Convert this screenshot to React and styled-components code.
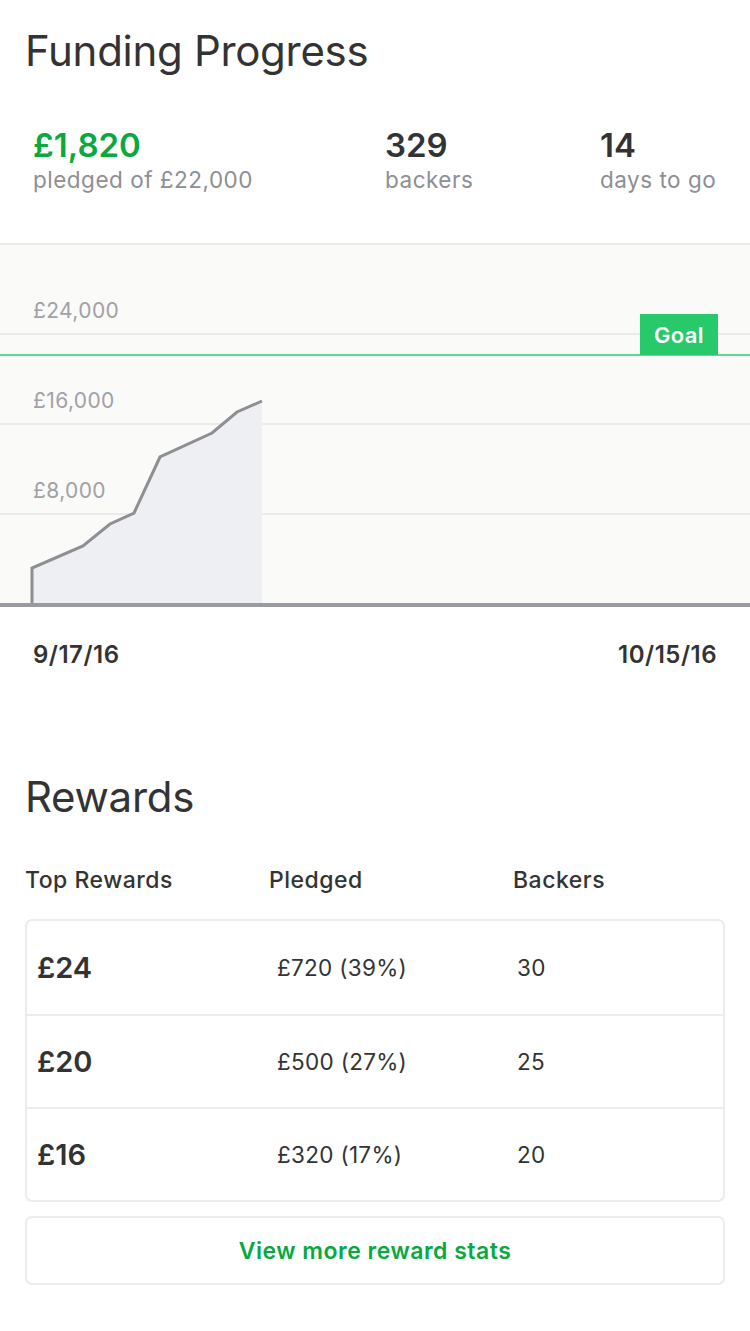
import React from "react";
import styled, { createGlobalStyle } from "styled-components";

const GlobalStyle = createGlobalStyle`
  body {
    margin: 0;
    background: #ffffff;
    font-family: Inter, "Liberation Sans", Arial, sans-serif;
    color: #333333;
  }
`;

const stats = [
  { value: "£1,820", label: "pledged of £22,000", green: true },
  { value: "329", label: "backers" },
  { value: "14", label: "days to go" },
];

const bands = ["£24,000", "£16,000", "£8,000", ""];

const rewards = [
  { amount: "£24", pledged: "£720 (39%)", backers: "30" },
  { amount: "£20", pledged: "£500 (27%)", backers: "25" },
  { amount: "£16", pledged: "£320 (17%)", backers: "20" },
];

// pledge curve, in chart pixels (0,0 = top-left under the top border)
const points = [
  [32, 358], [32, 323], [83, 301], [110, 279], [134, 268],
  [160, 212], [212, 188], [237, 167], [262, 156],
];

const App = () => {
  const line = points.map((p) => p.join(",")).join(" ");
  const area = `${line} 262,358`;

  return (
    <Page>
      <GlobalStyle />
      <Heading>Funding Progress</Heading>

      <StatsRow>
        {stats.map((s) => (
          <Stat key={s.label}>
            <StatValue $green={s.green}>{s.value}</StatValue>
            <StatLabel>{s.label}</StatLabel>
          </Stat>
        ))}
      </StatsRow>

      <Chart>
        {bands.map((b, i) => (
          <Band key={i} $last={i === bands.length - 1}>
            {b && <AxisLabel>{b}</AxisLabel>}
          </Band>
        ))}
        <Plot viewBox="0 0 750 358" preserveAspectRatio="none">
          <polygon points={area} fill="#eeeff2" />
          <polyline points={line} fill="none" stroke="#8e8e93" strokeWidth="3" strokeLinejoin="miter" />
          <line x1="0" y1="110" x2="750" y2="110" stroke="#2bcc6f" strokeWidth="1.5" />
        </Plot>
        <GoalBadge>Goal</GoalBadge>
      </Chart>

      <DatesRow>
        <DateText>9/17/16</DateText>
        <DateText>10/15/16</DateText>
      </DatesRow>

      <Heading $rewards>Rewards</Heading>

      <Columns>
        <ColumnTitle>Top Rewards</ColumnTitle>
        <ColumnTitle>Pledged</ColumnTitle>
        <ColumnTitle>Backers</ColumnTitle>
      </Columns>

      <Card>
        {rewards.map((r) => (
          <RewardRow key={r.amount}>
            <Amount>{r.amount}</Amount>
            <Cell>{r.pledged}</Cell>
            <Cell>{r.backers}</Cell>
          </RewardRow>
        ))}
      </Card>

      <MoreButton>View more reward stats</MoreButton>
    </Page>
  );
};

const Page = styled.div`
  width: 750px;
  min-height: 1331px;
  box-sizing: border-box;
  padding-bottom: 48px;
`;

const Heading = styled.h1`
  margin: 0;
  padding: ${(p) => (p.$rewards ? "0 25px" : "24px 25px 0")};
  font-size: 42px;
  font-weight: 400;
  line-height: 54px;
  letter-spacing: -0.3px;
  color: #333333;
`;

const StatsRow = styled.div`
  display: grid;
  grid-template-columns: 352px 215px 1fr;
  padding: 47px 0 0 33px;
  height: 165px;
  box-sizing: border-box;
`;

const Stat = styled.div`
  display: flex;
  flex-direction: column;
`;

const StatValue = styled.div`
  font-size: 33px;
  font-weight: 600;
  line-height: 40px;
  color: ${(p) => (p.$green ? "#09a93f" : "#333333")};
`;

const StatLabel = styled.div`
  font-size: 22.5px;
  line-height: 30px;
  letter-spacing: 0.5px;
  color: #8e8e93;
`;

const Chart = styled.div`
  position: relative;
  background: #fafaf8;
  border-top: 2px solid #ebebeb;
  border-bottom: 4px solid #9a9aa1;
`;

const Band = styled.div`
  height: ${(p) => (p.$last ? "88px" : "90px")};
  box-sizing: border-box;
  border-bottom: ${(p) => (p.$last ? "none" : "2px solid #ebebeb")};
  display: flex;
  align-items: flex-end;
  padding: 0 0 9px 33px;
`;

const AxisLabel = styled.span`
  font-size: 21px;
  line-height: 26px;
  letter-spacing: 0.4px;
  color: #a1a1a6;
`;

const Plot = styled.svg`
  position: absolute;
  left: 0;
  top: 0;
  width: 750px;
  height: 358px;
`;

const GoalBadge = styled.div`
  position: absolute;
  left: 640px;
  top: 69px;
  width: 78px;
  height: 41px;
  background: #27c96a;
  color: #ffffff;
  font-size: 22px;
  font-weight: 600;
  letter-spacing: 0.4px;
  display: flex;
  align-items: center;
  justify-content: center;
`;

const DatesRow = styled.div`
  display: flex;
  justify-content: space-between;
  padding: 33px 33px 0;
  height: 163px;
  box-sizing: border-box;
`;

const DateText = styled.span`
  font-size: 24px;
  font-weight: 600;
  line-height: 30px;
  letter-spacing: 0.5px;
  color: #333333;
`;

const Columns = styled.div`
  display: grid;
  grid-template-columns: 244px 244px 1fr;
  padding: 42px 25px 0;
  height: 95px;
  box-sizing: border-box;
`;

const ColumnTitle = styled.span`
  font-size: 23px;
  font-weight: 500;
  line-height: 28px;
  letter-spacing: 0.5px;
  color: #333333;
`;

const Card = styled.div`
  margin: 0 25px;
  border: 2px solid #ebebf0;
  border-radius: 7px;
`;

const RewardRow = styled.div`
  display: grid;
  grid-template-columns: 240px 240px 1fr;
  align-items: center;
  height: 93px;
  box-sizing: border-box;
  padding-left: 10px;

  & + & {
    border-top: 2px solid #ebebf0;
  }
`;

const Amount = styled.span`
  font-size: 29px;
  font-weight: 600;
  color: #333333;
`;

const Cell = styled.span`
  font-size: 22.5px;
  letter-spacing: 0.3px;
  color: #333333;
`;

const MoreButton = styled.button`
  display: flex;
  align-items: center;
  justify-content: center;
  box-sizing: border-box;
  width: 700px;
  height: 69px;
  margin: 14px 25px 0;
  background: #ffffff;
  border: 2px solid #ebebf0;
  border-radius: 7px;
  font-family: Inter, "Liberation Sans", Arial, sans-serif;
  font-size: 23px;
  font-weight: 600;
  letter-spacing: 0.5px;
  color: #09a93f;
  cursor: pointer;
`;

export default App;
